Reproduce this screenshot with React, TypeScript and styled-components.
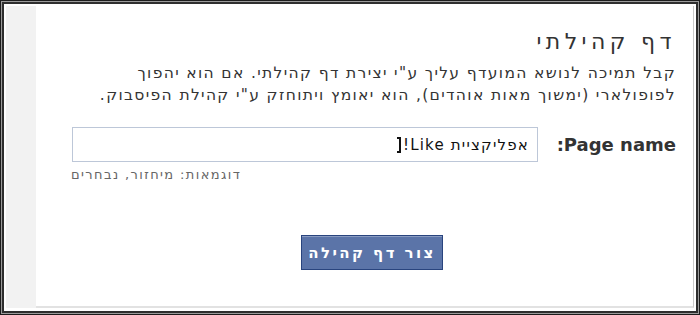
import React from "react";
import styled, { createGlobalStyle } from "styled-components";

const GlobalStyle = createGlobalStyle`
  html, body { margin: 0; padding: 0; background: #ffffff; }
  * { box-sizing: border-box; }
`;

const Frame = styled.div`
  width: 700px;
  height: 315px;
  border: 1px solid #1c1c1c;
  box-shadow: inset 0 0 0 1px #9a9a9a, inset 0 0 0 3px #2e2e2e, inset 0 0 0 5px #ffffff;
  padding: 5px 5px 6px 5px;
  display: flex;
  background: #ffffff;
`;

const Sidebar = styled.div`
  width: 30px;
  flex: none;
  background: #f2f2f2;
`;

const Content = styled.div`
  flex: 1;
  direction: rtl;
  display: flex;
  flex-direction: column;
  padding: 24px 17px 0 0;
  border-bottom: 2px solid #e2e2e2;
  border-right: 1px solid #c8c8c8;
  font-family: "DejaVu Sans", "Liberation Sans", sans-serif;
  color: #333333;
`;

const Title = styled.h1`
  margin: 0;
  font-size: 22px;
  font-weight: normal;
  line-height: 24px;
  letter-spacing: 4.4px;
  color: #333333;
`;

const Description = styled.p`
  margin: 8px 0 0 0;
  width: 603px;
  font-size: 15.5px;
  line-height: 22px;
  letter-spacing: 1.35px;
  color: #333333;
`;

const FormRow = styled.div`
  display: flex;
  align-items: center;
  gap: 18px;
  margin-top: 21px;
`;

const Label = styled.label`
  font-family: "DejaVu Sans", "Liberation Sans", sans-serif;
  font-weight: bold;
  font-size: 18px;
  color: #333333;
  width: 120px;
  flex: none;
  white-space: nowrap;
`;

const InputBox = styled.div`
  width: 466px;
  height: 35px;
  border: 1px solid #bdc7d8;
  display: flex;
  align-items: center;
  padding: 0 8px;
  font-size: 15px;
  letter-spacing: 1.2px;
  color: #111111;
  background: #ffffff;
`;

const Caret = styled.span`
  display: inline-block;
  width: 4px;
  height: 16px;
  border: 2px solid #111111;
  border-left: none;
  margin-right: 2px;
`;

const HintRow = styled.div`
  display: flex;
  justify-content: flex-end;
  padding-left: 35px;
  margin-top: 5px;
`;

const Hint = styled.span`
  font-size: 13px;
  color: #666666;
  letter-spacing: 1.4px;
`;

const ButtonRow = styled.div`
  display: flex;
  justify-content: flex-end;
  padding-left: 265px;
  margin-top: 53px;
`;

const Button = styled.button`
  width: 142px;
  height: 35px;
  direction: rtl;
  background: #5b74a8;
  border: 1px solid #29447e;
  box-shadow: inset 0 1px 0 #8a9cc2;
  color: #ffffff;
  font-family: "DejaVu Sans", "Liberation Sans", sans-serif;
  font-weight: bold;
  font-size: 15px;
  letter-spacing: 2.4px;
  padding: 0;
  cursor: pointer;
`;

export default function App() {
  return (
    <>
      <GlobalStyle />
      <Frame>
        <Sidebar />
        <Content>
          <Title>דף קהילתי</Title>
          <Description>
            קבל תמיכה לנושא המועדף עליך ע"י יצירת דף קהילתי. אם הוא יהפוך לפופולארי (ימשוך מאות אוהדים), הוא יאומץ ויתוחזק ע"י קהילת הפיסבוק.
          </Description>
          <FormRow>
            <Label>Page name:</Label>
            <InputBox>
              <span>אפליקציית Like!</span>
              <Caret />
            </InputBox>
          </FormRow>
          <HintRow>
            <Hint>דוגמאות: מיחזור, נבחרים</Hint>
          </HintRow>
          <ButtonRow>
            <Button type="button">צור דף קהילה</Button>
          </ButtonRow>
        </Content>
      </Frame>
    </>
  );
}
